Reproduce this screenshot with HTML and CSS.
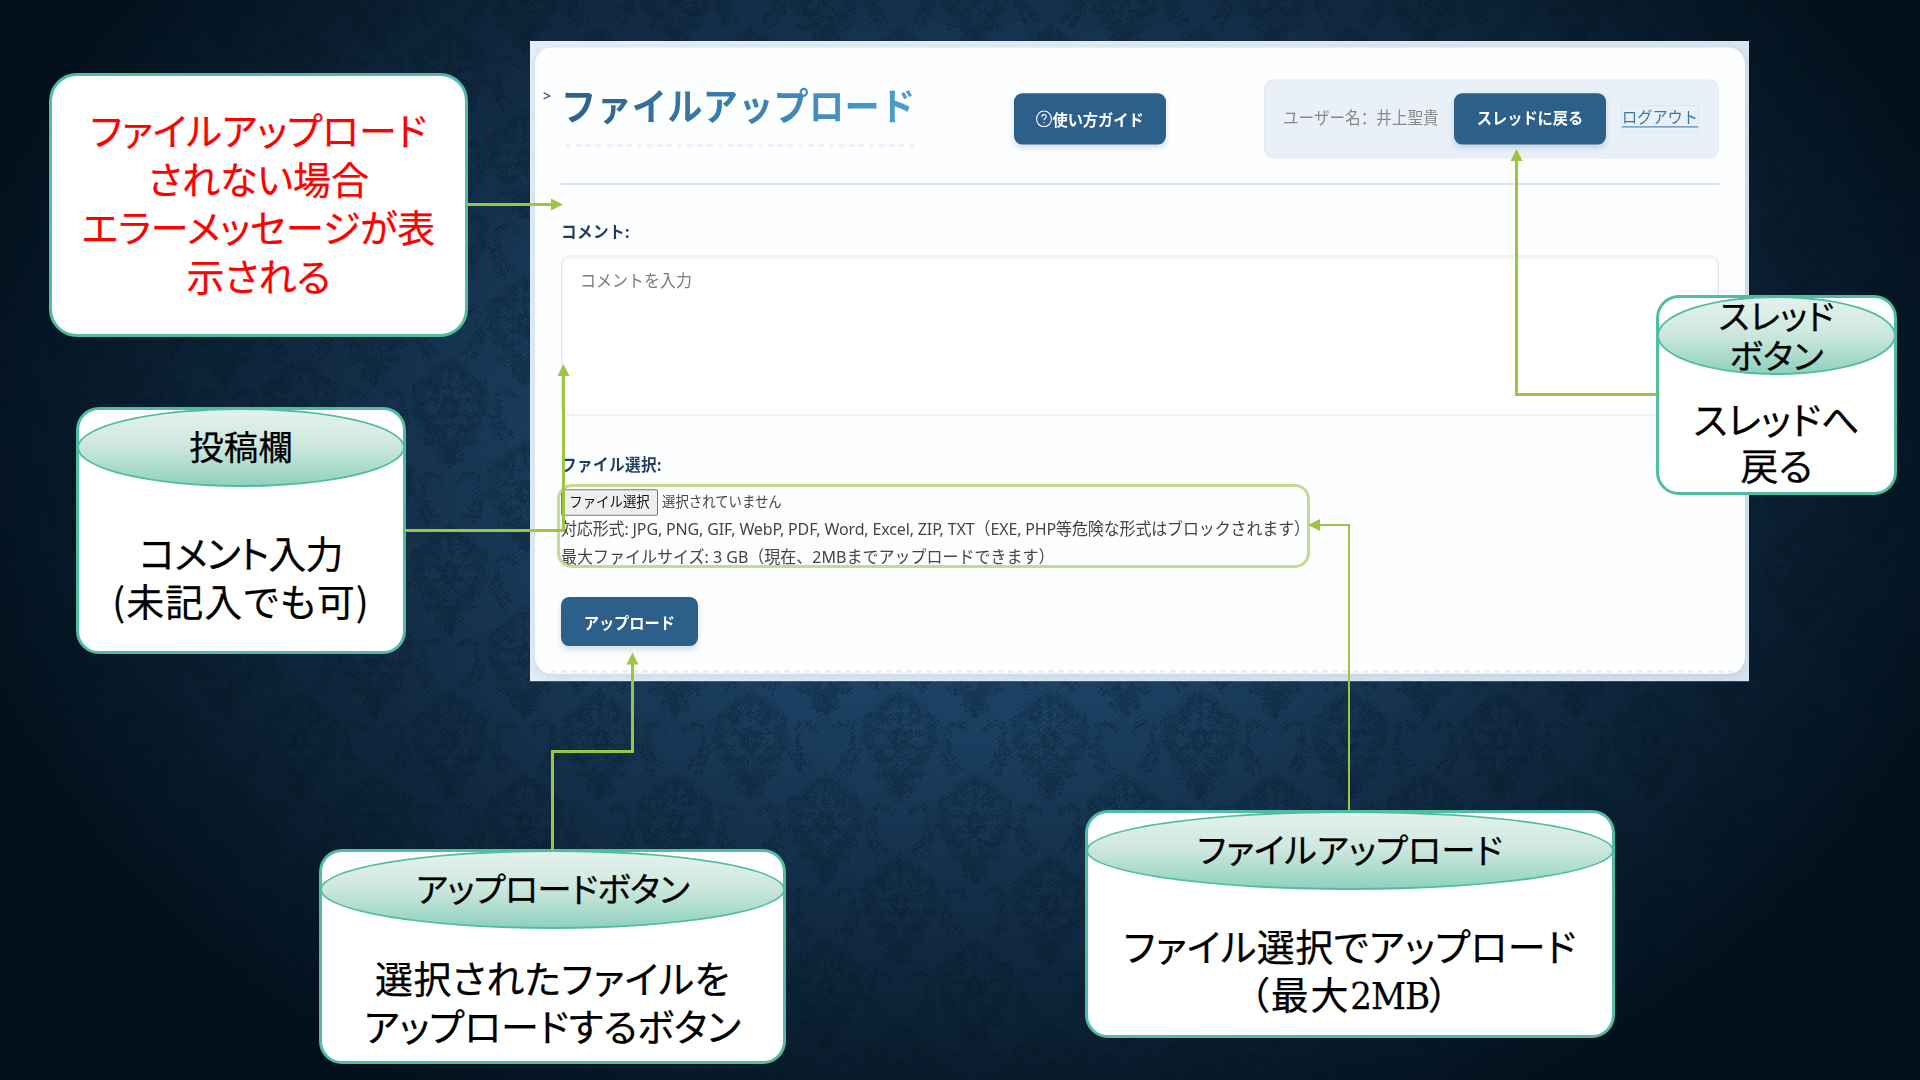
FILE: index.html
```html
<!DOCTYPE html>
<html lang="ja">
<head>
<meta charset="utf-8">
<title>ファイルアップロード</title>
<link rel="stylesheet" href="styles.css">
</head>
<body>
<main class="slide">
  <svg class="backdrop" viewBox="0 0 1920 1080" aria-hidden="true">
    <defs>
      <radialGradient id="glow" gradientUnits="userSpaceOnUse" cx="0" cy="0" r="1" gradientTransform="translate(970 440) scale(1060 790)">
        <stop offset="0" stop-color="#234e75"/>
        <stop offset=".35" stop-color="#1c4265"/>
        <stop offset=".6" stop-color="#132d47"/>
        <stop offset=".83" stop-color="#081b2c"/>
        <stop offset="1" stop-color="#020f1b"/>
      </radialGradient>
      <g id="half" fill="none" stroke="#06131f" stroke-width="3.5" stroke-linecap="round">
        <path d="M0-50v30M6-44c8 4 6 14 2 20M13-38c6 4 9 12 3 20M10-18c8-10 18-12 24-6s-2 12-8 8M8-8c10-4 22-2 26 6s-6 10-10 4M6 4c8-2 18 4 16 12s-10 6-10 0M4 14c8 6 20 6 26 0M4 22c4 10 16 14 22 8M2 32c6 2 12 10 8 18M48-8c-2 16 4 26 14 34M46-14c8-8 16-4 20 2M42 4c0 10 6 20 12 28"/>
        <path d="M0-12c8 4 8 14 0 20M0 38c5 4 5 12 0 18" stroke-width="6"/>
        <path d="M2-44c16 4 20 16 28 26s-2 24-8 34-14 18-22 22" stroke-width="13" opacity=".35"/>
      </g>
      <g id="motif"><use href="#half"/><use href="#half" transform="scale(-1 1)"/></g>
      <pattern id="damask" width="150" height="166" x="825" y="659" patternUnits="userSpaceOnUse">
        <use href="#motif" x="75" y="83"/>
        <use href="#motif" x="0" y="0"/><use href="#motif" x="150" y="0"/>
        <use href="#motif" x="0" y="166"/><use href="#motif" x="150" y="166"/>
      </pattern>
      <pattern id="weave" width="4" height="4" patternUnits="userSpaceOnUse" patternTransform="rotate(55)">
        <rect width="1.4" height="4" fill="#000"/>
      </pattern>
      <filter id="rough" x="0" y="0" width="100%" height="100%">
        <feTurbulence type="fractalNoise" baseFrequency=".32" numOctaves="3" seed="4"/>
        <feDisplacementMap in="SourceGraphic" scale="17" xChannelSelector="R" yChannelSelector="G"/>
        <feGaussianBlur stdDeviation=".5"/>
      </filter>
    </defs>
    <rect width="1920" height="1080" fill="url(#glow)"/>
    <rect width="1920" height="1080" fill="url(#damask)" filter="url(#rough)" opacity=".28"/>
    <rect width="1920" height="1080" fill="url(#weave)" opacity=".08"/>
  </svg>

  <section class="screen">
    <div class="page">
      <header class="top">
        <span class="crumb">&gt;</span>
        <h1 class="title">ファイルアップロード</h1>
        <button class="btn guide"><svg class="help" viewBox="0 0 16 16"><circle cx="8" cy="8" r="7.4"/><path d="M5.8 6.1c.1-2.8 4.5-2.7 4.4-.2 0 1.5-2.1 1.6-2.1 3.4M8.1 10.8v1.3"/></svg>使い方ガイド</button>
        <div class="user">
          <span class="name">ユーザー名<span class="colon" lang="zh-CN">：</span>井上聖貴</span>
          <button class="btn back">スレッドに戻る</button>
          <a class="logout">ログアウト</a>
        </div>
      </header>
      <form class="form">
        <label class="label">コメント:</label>
        <div class="comment">コメントを入力</div>
        <label class="label file-label">ファイル選択:</label>
        <div class="picker"><span class="choose">ファイル選択</span><span>選択されていません</span></div>
        <p class="note formats">対応形式: JPG, PNG, GIF, WebP, PDF, Word, Excel, ZIP, TXT（EXE, PHP等危険な形式はブロックされます）</p>
        <p class="note size">最大ファイルサイズ: 3 GB（現在、2MBまでアップロードできます）</p>
        <button class="btn upload">アップロード</button>
      </form>
    </div>
  </section>

  <div class="highlight"></div>

  <article class="callout error">
    <p class="body"><span>ファイルアップロード</span><span>されない場合</span><span>エラーメッセージが表</span><span>示される</span></p>
  </article>
  <article class="callout post">
    <h2 class="cap"><span>投稿欄</span></h2>
    <p class="body"><span class="tight">コメント入力</span><span class="wide">(未記入でも可)</span></p>
  </article>
  <article class="callout send">
    <h2 class="cap"><span class="tight">アップロードボタン</span></h2>
    <p class="body"><span class="loose">選択されたファイルを</span><span>アップロードするボタン</span></p>
  </article>
  <article class="callout files">
    <h2 class="cap"><span>ファイルアップロード</span></h2>
    <p class="body"><span class="loose">ファイル選択でアップロード</span><span class="paren">（最大<b class="latin">2MB</b>）</span></p>
  </article>
  <article class="callout thread">
    <h2 class="cap"><span>スレッド</span><span>ボタン</span></h2>
    <p class="body"><span>スレッドへ</span><span>戻る</span></p>
  </article>

  <svg class="wires" viewBox="0 0 1920 1080" aria-hidden="true">
    <g fill="none" stroke="#9dc544" stroke-width="3">
      <path d="M467 204.5H552M405 530.5H563.5V374M552.5 850V751.5H632.5V663M1657 394.5H1516.5V160"/>
      <path stroke-width="2" d="M1349 810V525H1319"/>
    </g>
    <path fill="#9dc544" d="M551 198.5v12l12-6zM557.5 376h12l-6-12zM626.5 664.5h12l-6-12zM1510.5 161h12l-6-12zM1320 519v12l-12-6z"/>
  </svg>
</main>
</body>
</html>
```
FILE: styles.css
```css
* { box-sizing: border-box; }
body { margin: 0; background: #041220; }
.slide { position: relative; width: 1920px; height: 1080px; overflow: hidden; font-family: "Noto Sans CJK JP", sans-serif; }
.backdrop, .wires { position: absolute; left: 0; top: 0; width: 1920px; height: 1080px; }

/* captured page, slightly stretched vertically */
.screen {
  position: absolute; left: 530px; top: 41px; width: 1219px; height: 600px;
  padding: 5.6px 4px 7px 5px;
  background: linear-gradient(100deg, #e6eff7, #d8e4ee);
  transform: scaleY(1.067); transform-origin: 0 0;
  overflow: hidden;
  font-family: "Noto Sans", "Noto Sans CJK JP", sans-serif;
  font-size: 16px; line-height: 25.6px; color: #444;
}
.page {
  position: relative; height: 587.4px; padding: 30px 26px 0;
  background: #fdfeff; border-radius: 16px;
  box-shadow: 0 3px 10px rgba(60, 100, 150, .16);
}
.page::after {
  content: ""; position: absolute; left: 16px; right: 12px; bottom: 1px; height: 1.6px;
  background: repeating-linear-gradient(90deg, #e6eaf3 0 5.5px, transparent 5.5px 10.15px);
}
.top { position: relative; display: flex; align-items: flex-start; height: 99.5px; border-bottom: 2px solid #dae5f0; }
.crumb { position: absolute; left: -18px; top: 5px; font-size: 14px; line-height: 20px; font-weight: 600; color: #2c5f8a; }
.title {
  width: 354px; height: 63px; margin: 0; padding: 1px 0 0;
  font-size: 35.2px; line-height: 46px; font-weight: 700; letter-spacing: .25px; white-space: nowrap; color: transparent;
  background: repeating-linear-gradient(90deg, transparent 0 5px, #e6ebf4 5px 10.1px) 0 61px / 100% 2px no-repeat, linear-gradient(90deg, #2c5f8a, #4a9fd0) 0 0 / 100% 55px no-repeat;
  -webkit-background-clip: border-box, text; background-clip: border-box, text;
}
.btn {
  display: flex; align-items: center; justify-content: center; flex: none; gap: 0; padding: 0;
  height: 48.7px; border: 0; border-radius: 8px; background: #2c5f8a; color: #fff;
  font: 700 15.2px/24px "Noto Sans CJK JP", sans-serif; box-shadow: 0 3px 6px rgba(30, 60, 90, .17);
}
.guide { width: 152px; margin: 13px 0 0 99px; }
.help { width: 16px; height: 16px; fill: none; stroke: #fff; stroke-width: 1.1; }
.user {
  display: flex; align-items: center; width: 455px; height: 74px; margin-left: auto;
  padding: 0 15px 0 18px; border: 1px solid #dfe8f3; border-radius: 9px; background: #e9f0f8;
}
.name { width: 156px; font-size: 15.6px; color: #888; margin-top: -1px; white-space: nowrap; }
.colon { font-family: "Noto Sans CJK SC", sans-serif; }
.back { width: 152px; height: 48.7px; margin: 1px 15px 0; font-weight: 600; padding-bottom: 4px; }
.logout { flex: none; width: 78px; height: 26px; border: 1px solid #dce7f2; font-size: 15.2px; line-height: 21px; text-align: center; white-space: nowrap; text-decoration: underline; text-underline-offset: 3px; color: #3d77a8; }
.form { display: flex; flex-direction: column; align-items: flex-start; padding-top: 30px; }
.label { height: 36px; font-size: 15.6px; font-weight: 700; letter-spacing: .4px; line-height: 28px; color: #1e3d5f; }
.comment {
  width: 1158px; height: 150px; padding: 11px 18px; border: 1.5px solid #dfe8f1; border-radius: 8px;
  background: #fff; box-shadow: inset 0 2px 4px rgba(0, 0, 0, .05); color: #7c7c7c;
}
.file-label { margin-top: 32px; }
.picker { display: flex; align-items: center; gap: 4px; height: 25px; margin-top: 1px; font-size: 13.4px; color: #444; }
.choose { width: 97px; height: 25px; border: 1px solid #777; border-radius: 2px; background: #efefef; text-align: center; line-height: 23px; color: #111; }
.note { margin: 0; white-space: nowrap; }
.formats { letter-spacing: -.14px; }
.upload { width: 136.5px; height: 46.5px; margin-top: 24.5px; }

.highlight { position: absolute; left: 557px; top: 484px; width: 753px; height: 84px; border: 3px solid #c4da8c; border-radius: 15px; }

/* callouts pinned round the captured page */
.callout { position: absolute; border: 3px solid #50bca2; border-radius: 23px; background: #fff; color: #000; -webkit-text-stroke: .25px currentColor; }
.cap {
  position: absolute; left: -2px; right: -2px; top: -2px; height: 79px; margin: 0; padding-bottom: 5px;
  display: flex; flex-direction: column; align-items: center; justify-content: center;
  border: 2px solid #50bca2; border-radius: 50%;
  background: linear-gradient(#e3f2ec, #cfe8df 45%, #bfe3d6 60%, #90d1bf);
  font-size: 34.5px; line-height: 40px; font-weight: 400;
}
.body { margin: 0; display: flex; flex-direction: column; align-items: center; font-size: 38px; line-height: 47.5px; }
.cap span, .body span { white-space: nowrap; font-feature-settings: "palt"; }
.cap .tight, .body .tight { letter-spacing: -.8px; }
.body .wide { letter-spacing: 1.1px; }
.body .loose { letter-spacing: .4px; }

.error { left: 49px; top: 73px; width: 419px; height: 264px; border-radius: 28px; color: #f00; }
.error .body { padding-top: 29px; line-height: 48.5px; }
.post { left: 76px; top: 407px; width: 330px; height: 247px; }
.post .body { padding-top: 118px; }
.send { left: 319px; top: 849px; width: 467px; height: 215px; }
.send .body { padding-top: 101px; }
.files { left: 1085px; top: 810px; width: 530px; height: 228px; }
.files .body { padding-top: 108px; }
.files .paren { letter-spacing: 1.8px; }
.latin { font: 400 38px/40px "DejaVu Serif Condensed", "DejaVu Serif", serif; font-stretch: condensed; letter-spacing: -1px; }
.thread { left: 1656px; top: 295px; width: 241px; height: 200px; }
.thread .cap { padding-bottom: 4px; }
.thread .body { padding-top: 97px; line-height: 46px; }
```
